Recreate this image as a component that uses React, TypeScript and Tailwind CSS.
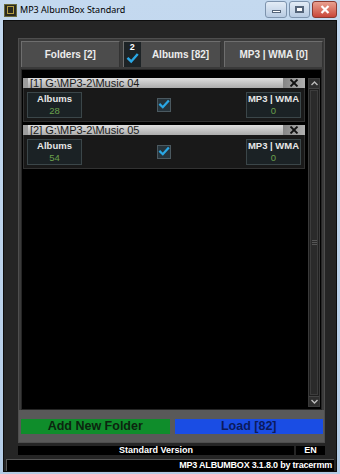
import React from "react";

const font = { fontFamily: '"Liberation Sans", Arial, sans-serif' };

function Check({ size = 14 }: { size?: number }) {
  return (
    <svg width={size} height={size} viewBox="0 0 14 14">
      <path d="M2.5 7.2 L5.6 10.2 L11.8 3.2" fill="none" stroke="#2aa8e6" strokeWidth="2.6" strokeLinecap="square" />
    </svg>
  );
}

function StatBox({ label, value }: { label: string; value: string }) {
  return (
    <div className="w-[55px] h-[26px] bg-[#1b2225] border border-[#3b4649] flex flex-col items-center justify-center leading-none">
      <div className="text-[9.5px] font-bold text-[#e8e8e8] whitespace-nowrap">{label}</div>
      <div className="text-[9.5px] text-[#6aa04c] mt-[3px]">{value}</div>
    </div>
  );
}

function FolderRow({ idx, path, albums }: { idx: number; path: string; albums: string }) {
  return (
    <div className="flex flex-col">
      <div className="h-[10px] flex bg-gradient-to-b from-[#dedede] to-[#acacac] items-center">
        <div className="w-[5px] h-full bg-[#9c9c9c]" />
        <div className="flex-1 text-[11px] leading-none text-[#1a1a1a] pl-[2px] whitespace-nowrap">
          [{idx}] {path}
        </div>
        <div className="w-[22px] h-full bg-gradient-to-r from-[#858585] to-[#b0b0b0] flex items-center justify-center">
          <svg width="10" height="8" viewBox="0 0 10 8">
            <path d="M1.5 0.5 L8.5 7.5 M8.5 0.5 L1.5 7.5" stroke="#111" strokeWidth="1.8" />
          </svg>
        </div>
      </div>
      <div className="h-[34px] bg-[#191919] border border-[#323232] border-t-0 flex items-center justify-between px-[3px]">
        <StatBox label="Albums" value={albums} />
        <div className="w-[14px] h-[14px] bg-[#26343c] border border-[#4b5960] flex items-center justify-center">
          <Check size={13} />
        </div>
        <StatBox label="MP3 | WMA" value="0" />
      </div>
    </div>
  );
}

export default function App() {
  return (
    <div className="w-[340px] h-[474px] bg-gradient-to-b from-[#c4d9ef] to-[#b4cce6] flex flex-col px-[3px] pb-[2px] overflow-hidden" style={font}>
      {/* Title bar */}
      <div className="h-[20px] flex items-center shrink-0">
        <div className="w-[13px] h-[13px] bg-[#2a2a20] border border-[#6a6a3a] ml-[1px] mr-[3px] flex items-center justify-center">
          <div className="w-[7px] h-[8px] border border-[#b8a040]" />
        </div>
        <div className="text-black whitespace-nowrap" style={{ fontFamily: '"Noto Sans", "Liberation Sans", sans-serif', fontSize: 9 }}>
          MP3 AlbumBox Standard
        </div>
        <div className="flex-1" />
        <div className="flex items-start h-full pt-[1px]">
          <div className="w-[22px] h-[17px] border border-[#7d93ad] rounded-[3px] bg-gradient-to-b from-[#e3ecf6] to-[#b8cbe2] flex items-center justify-center">
            <div className="w-[9px] h-[3px] bg-white border border-[#55657a] mt-[4px]" />
          </div>
          <div className="w-[21px] h-[17px] ml-[2px] border border-[#7d93ad] rounded-[3px] bg-gradient-to-b from-[#e3ecf6] to-[#b8cbe2] flex items-center justify-center">
            <div className="w-[9px] h-[7px] border-[2px] border-[#55657a] bg-white" />
          </div>
          <div className="w-[25px] h-[17px] ml-[2px] border border-[#8a3a30] rounded-[3px] bg-gradient-to-b from-[#e8a090] to-[#c8463a] flex items-center justify-center">
            <svg width="10" height="9" viewBox="0 0 10 9">
              <path d="M1.5 1 L8.5 8 M8.5 1 L1.5 8" stroke="white" strokeWidth="2.2" />
            </svg>
          </div>
        </div>
      </div>

      {/* Client */}
      <div className="flex-1 bg-[#252525] border border-[#0d0d0d] flex flex-col">
        <div className="flex flex-col pl-[14px] pr-[11px] pt-[17px]">
          {/* Panel */}
          <div className="h-[405px] bg-[#3a3a3a] border border-[#4e4e4e] flex flex-col">
            {/* Tabs */}
            <div className="h-[28px] flex gap-[3px] pl-[2px] pr-[1px] pt-[2px] shrink-0">
              <div className="flex-1 bg-[#4c4c4c] border-t border-l border-[#6e6e6e] border-r border-r-[#333] flex items-center justify-center text-[10px] font-bold text-[#ececec]">
                Folders [2]
              </div>
              <div className="flex-1 bg-[#4c4c4c] border-t border-l border-[#6e6e6e] border-r border-r-[#333] flex items-center text-[10px] font-bold text-[#ececec]">
                <div className="w-[17px] h-full bg-[#1d2326] flex flex-col items-center pt-[1px]">
                  <div className="text-[9px] leading-none text-white">2</div>
                  <Check size={13} />
                </div>
                <div className="flex-1 text-center">Albums [82]</div>
              </div>
              <div className="flex-1 bg-[#4c4c4c] border-t border-l border-[#6e6e6e] border-r border-r-[#333] flex items-center justify-center text-[10px] font-bold text-[#ececec]">
                MP3 | WMA [0]
              </div>
            </div>
            {/* List */}
            <div className="h-[341px] mt-[2px] mx-[2px] bg-black border border-[#262626] flex pt-[8px] pb-[2px] pl-[1px] pr-[1px] gap-[3px]">
              <div className="flex-1 flex flex-col gap-[3px]">
                <FolderRow idx={1} path="G:\MP3-2\Music 04" albums="28" />
                <FolderRow idx={2} path="G:\MP3-2\Music 05" albums="54" />
              </div>
              <div className="w-[12px] flex flex-col bg-[#1f1f1f] border border-[#3a3a3a]">
                <div className="h-[10px] bg-[#2e2e2e] border-b border-[#444] flex items-center justify-center">
                  <svg width="7" height="5" viewBox="0 0 7 5"><path d="M0.5 4 L3.5 1 L6.5 4" fill="none" stroke="#bbb" strokeWidth="1.4" /></svg>
                </div>
                <div className="flex-1 m-[1px] bg-[#2a2a2a] border border-[#3c3c3c] flex items-center justify-center">
                  <div className="flex flex-col gap-[1px]">
                    <div className="w-[5px] h-[1px] bg-[#555]" />
                    <div className="w-[5px] h-[1px] bg-[#555]" />
                    <div className="w-[5px] h-[1px] bg-[#555]" />
                  </div>
                </div>
                <div className="h-[10px] bg-[#2e2e2e] border-t border-[#444] flex items-center justify-center">
                  <svg width="7" height="5" viewBox="0 0 7 5"><path d="M0.5 1 L3.5 4 L6.5 1" fill="none" stroke="#bbb" strokeWidth="1.4" /></svg>
                </div>
              </div>
            </div>
            {/* Buttons */}
            <div className="flex-1 bg-[#595959] flex items-start gap-[5px] pl-[2px] pr-[1px] pt-[9px]">
              <div className="flex-1 h-[15px] bg-[#0f8d2b] flex items-center justify-center text-[12.5px] font-bold text-[#0c250f] leading-none">
                Add New Folder
              </div>
              <div className="flex-1 h-[15px] bg-[#1a4de4] flex items-center justify-center text-[12.5px] font-bold text-[#0b1a5c] leading-none">
                Load [82]
              </div>
            </div>
          </div>
          {/* Standard version */}
          <div className="flex mt-[3px] h-[9px] gap-[2px]">
            <div className="flex-1 bg-black flex items-center justify-center text-[9px] font-bold text-white leading-none">
              Standard Version
            </div>
            <div className="w-[29px] bg-black flex items-center justify-center text-[9px] font-bold text-white leading-none">
              EN
            </div>
          </div>
        </div>
        {/* Status */}
        <div className="h-[12px] mt-[4px] mx-[2px] bg-black border-t border-l border-[#555] flex items-center justify-end pr-[2px] text-[9px] font-bold text-white leading-none tracking-[-0.2px]">
          MP3 ALBUMBOX 3.1.8.0 by tracermm
        </div>
      </div>
    </div>
  );
}
